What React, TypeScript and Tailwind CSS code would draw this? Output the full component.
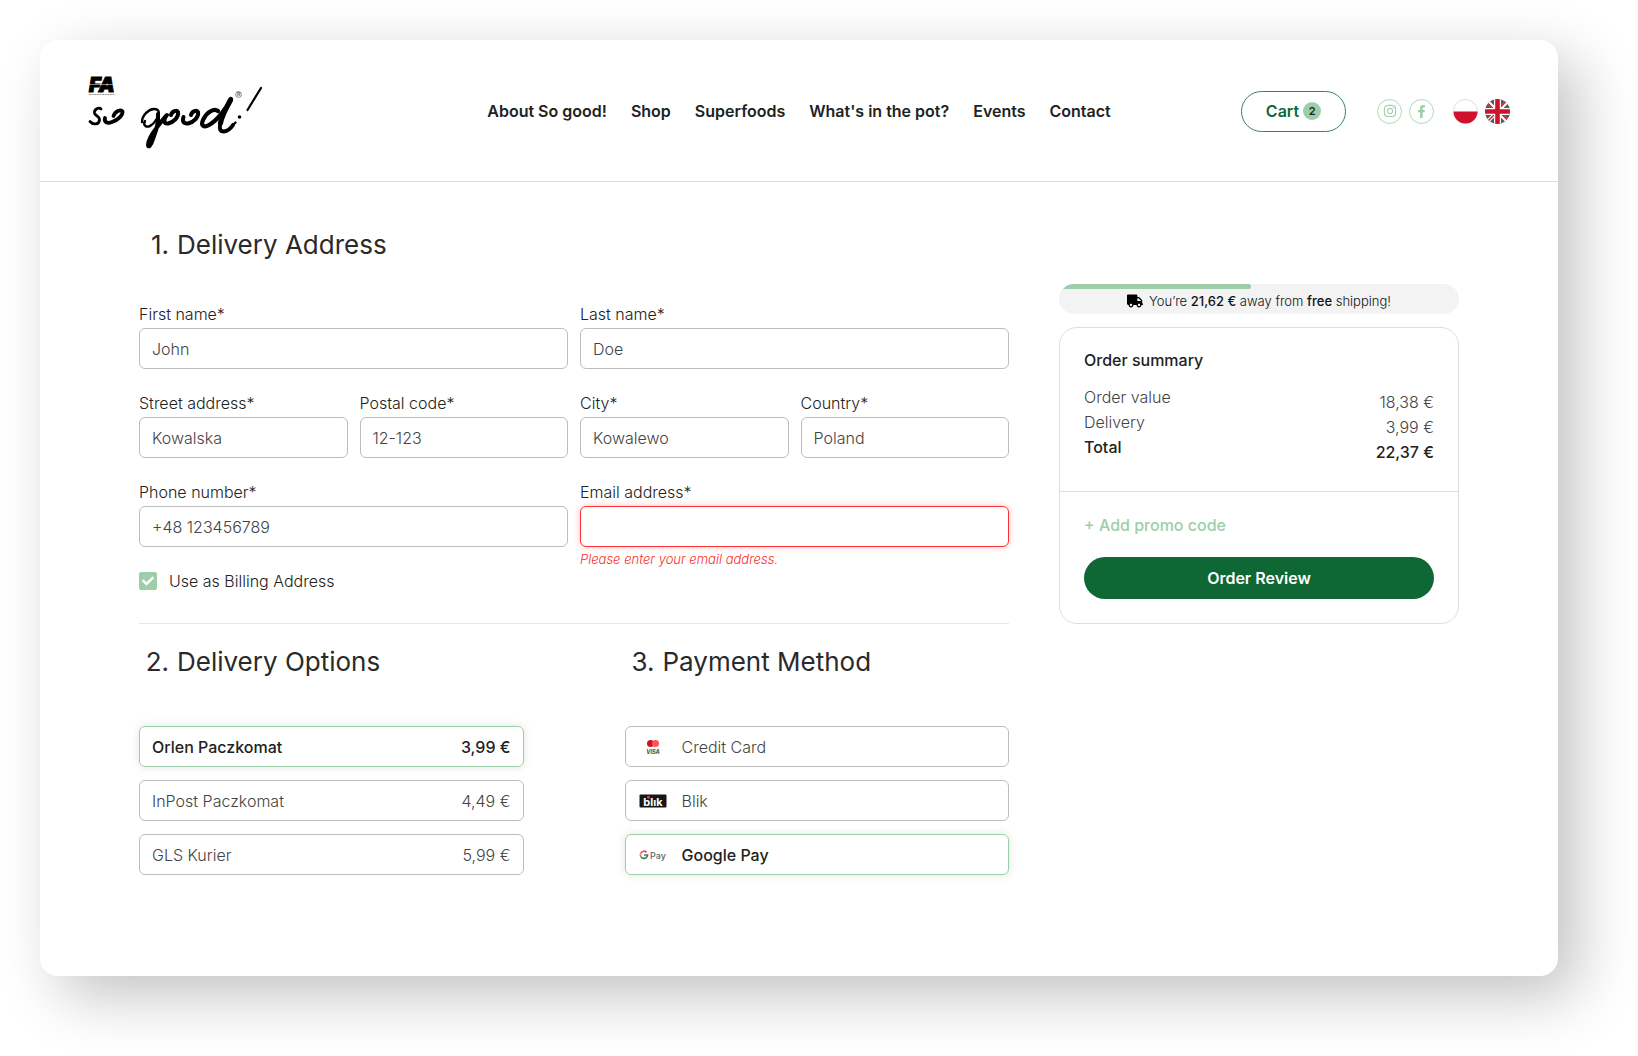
import React, { useId, useState } from "react";
import { FaInstagram, FaFacebookF, FaTruck, FaCheck } from "react-icons/fa";

function Logo() {
  return (
    <svg width="190" height="80" viewBox="0 0 190 80" role="img" aria-label="FA So good!">
      <text x="5" y="21" fontFamily="Inter, sans-serif" fontSize="20" fontWeight="900" fontStyle="italic" stroke="#000" strokeWidth="1">
        FA
      </text>
      <path d="M5 13.500H31" stroke="#fff" strokeWidth="0.500" />
      <path d="M5 23.500H31" stroke="#999" strokeWidth="1.200" strokeDasharray="2 0.600" />
      <g fill="none" stroke="#000" strokeLinecap="round" strokeLinejoin="round">
        <path strokeWidth="2.800" d="M17 38C15 36 10 38 10.500 42C11 45 16 45 15.500 49C15 54 9 54 6 50.500" />
        <path strokeWidth="3.800" d="M21 47C20 51 23 53 28 51C34 49 39 44 38.500 40.500C37 38 31 40 29.500 45" />
        <path strokeWidth="2.400" d="M58 51C58 44 65 38 70 38C76 38 76 43 72 49C69 54 64 57 61.500 55C60 54 60 52 61 50" />
        <path strokeWidth="4" d="M74 43C75 52 72 60 69 68C67 75 64 77 64 74C64 68 70 60 74 55C77 51 80 47 83 44" />
        <path strokeWidth="4" d="M81.500 46C79.500 50 80 53 84 52.500C90 51 95 46 94 41C93 38.500 88 40 87 44" />
        <path strokeWidth="4" d="M99.500 46C98 51 100 53 104 52.500C110 51 115 46 114 41C113 38.500 108 40 107 44" />
        <path strokeWidth="4.200" d="M134 40C130 37 123 41 119.500 48C116 55 120 57 125 54C134 49 143 36 147 28" />
        <path strokeWidth="5.200" d="M146.500 29C142 38 138 44 136.500 52" />
        <path strokeWidth="4" d="M136.500 52C135 58 136 60.500 140 60.500C144 60 147 57 149 54" />
        <path strokeWidth="2.400" d="M149 54L151.500 51.500" />
        <path strokeWidth="2.200" d="M177 17L163.500 39" />
      </g>
      <circle cx="155.500" cy="46" r="1.800" />
      <circle cx="154.500" cy="23.500" r="2.900" fill="none" stroke="#555" strokeWidth="0.700" />
      <text x="152.900" y="25.400" fontFamily="Inter, sans-serif" fontSize="5" fontWeight="600" fill="#555">
        R
      </text>
    </svg>
  );
}

function PolishFlag() {
  return (
    <svg width="25" height="25" viewBox="0 0 25 25" aria-hidden="true">
      <circle cx="12.500" cy="12.500" r="12" fill="#fff" stroke="#dcdcdc" strokeWidth="1" />
      <path d="M0.500 12.500H24.500A12 12 0 0 1 0.500 12.500Z" fill="#d0112b" />
    </svg>
  );
}

function BritishFlag() {
  return (
    <svg width="25" height="25" viewBox="0 0 25 25" aria-hidden="true">
      <clipPath id="uk-round">
        <circle cx="12.500" cy="12.500" r="12.500" />
      </clipPath>
      <g clipPath="url(#uk-round)">
        <rect width="25" height="25" fill="#555a5e" />
        <path d="M0 0L25 25M25 0L0 25" stroke="#fff" strokeWidth="3.600" />
        <path d="M2 3.500L11 12.500M14 12.500L23 21.500M21.500 2L12.500 11M11 14L2 23" stroke="#d0112b" strokeWidth="1.400" />
        <path d="M12.500 0V25M0 12.500H25" stroke="#fff" strokeWidth="7" />
        <path d="M12.500 0V25M0 12.500H25" stroke="#d0112b" strokeWidth="4.600" />
      </g>
    </svg>
  );
}

function CardLogo() {
  return (
    <svg width="28" height="16" viewBox="0 0 28 16" aria-hidden="true">
      <circle cx="11.500" cy="4.500" r="3.500" fill="#cf1029" />
      <circle cx="16.500" cy="4.500" r="3.500" fill="#ff5252" />
      <text x="14" y="14.500" textAnchor="middle" fontFamily="Inter, sans-serif" fontSize="5.500" fontWeight="800" fontStyle="italic" fill="#3c6b54">
        VISA
      </text>
    </svg>
  );
}

function BlikLogo() {
  return (
    <svg width="28" height="16" viewBox="0 0 28 16" aria-hidden="true">
      <rect x="0.500" y="1.500" width="27" height="13" rx="1" fill="#161616" />
      <text x="14" y="12.500" textAnchor="middle" fontFamily="Inter, sans-serif" fontSize="11" fontWeight="700" fill="#fff">
        blık
      </text>
      <circle cx="9.500" cy="4.200" r="1.500" fill="#e8394a" />
    </svg>
  );
}

function GooglePayLogo() {
  return (
    <svg width="28" height="16" viewBox="0 0 28 16" aria-hidden="true">
      <g fill="none" strokeWidth="1.700">
        <path d="M7.600 5.300A3.600 3.600 0 0 0 1.900 6" stroke="#f0524a" />
        <path d="M1.900 6A3.800 3.800 0 0 0 1.900 9.600" stroke="#d98a80" />
        <path d="M1.900 9.600A3.600 3.600 0 0 0 7.400 10.500" stroke="#2f8f55" />
        <path d="M5 8H8.500C8.500 9 8.200 9.900 7.400 10.500" stroke="#5b6f78" />
      </g>
      <text x="11" y="11.500" fontFamily="Inter, sans-serif" fontSize="9" fill="#5f6368">
        Pay
      </text>
    </svg>
  );
}

type FieldProps = {
  label: string;
  value?: string;
  type?: string;
  error?: string;
  className?: string;
};

function Field({ label, value = "", type = "text", error, className = "" }: FieldProps) {
  const id = useId();
  return (
    <div className={className}>
      <label htmlFor={id} className="mb-[2px] block leading-6 font-light text-[#222]">
        {label}
      </label>
      <input
        id={id}
        type={type}
        defaultValue={value}
        aria-invalid={!!error}
        aria-describedby={error ? id + "-error" : undefined}
        className={
          error
            ? "block h-[41px] w-full rounded-md border border-[#fb3236] px-3 font-light text-[#444] shadow-[0_0_6px_rgba(255,60,60,0.35)] outline-none"
            : "block h-[41px] w-full rounded-md border border-[#bdbdbd] px-3 font-light text-[#444] outline-none"
        }
      />
      {error && (
        <p id={id + "-error"} className="text-[13px] leading-6 font-light text-[#f92c2f] italic">
          {error}
        </p>
      )}
    </div>
  );
}

function StepTitle({ number, children }: { number: number; children: React.ReactNode }) {
  return (
    <h2 className="flex gap-2 text-[26px] leading-9 text-[#2a2a2a]">
      <span className="w-[30px] text-right">{number}.</span>
      <span>{children}</span>
    </h2>
  );
}

type Option = { name: string; price?: string; logo?: React.ReactNode };

function OptionList({ group, options, initial }: { group: string; options: Option[]; initial: number }) {
  const [selected, setSelected] = useState(initial);
  return (
    <div role="radiogroup" aria-label={group} className="mt-[46px] flex flex-col gap-[13px]">
      {options.map((o, i) => (
        <label
          key={o.name}
          className={
            i === selected
              ? "flex h-[41px] cursor-pointer items-center rounded-md border border-[#9dcea9] px-3 font-medium text-[#222] shadow-[0_0_8px_rgba(120,160,120,0.25)]"
              : "flex h-[41px] cursor-pointer items-center rounded-md border border-[#bdbdbd] px-3 font-light text-[#444]"
          }
        >
          <input type="radio" name={group} checked={i === selected} onChange={() => setSelected(i)} className="sr-only" />
          {o.logo && <span className="mr-[15px] ml-px">{o.logo}</span>}
          <span>{o.name}</span>
          {o.price && <span className="ml-auto">{o.price}</span>}
        </label>
      ))}
    </div>
  );
}

const navItems = ["About So good!", "Shop", "Superfoods", "What's in the pot?", "Events", "Contact"];

const deliveryOptions: Option[] = [
  { name: "Orlen Paczkomat", price: "3,99 €" },
  { name: "InPost Paczkomat", price: "4,49 €" },
  { name: "GLS Kurier", price: "5,99 €" },
];

const paymentOptions: Option[] = [
  { name: "Credit Card", logo: <CardLogo /> },
  { name: "Blik", logo: <BlikLogo /> },
  { name: "Google Pay", logo: <GooglePayLogo /> },
];

function Header() {
  return (
    <header className="grid grid-cols-[1fr_auto_1fr] items-center border-b border-[#dedede] px-12 pt-[31px] pb-[30px]">
      <div className="-ml-1">
        <Logo />
      </div>
      <nav className="flex gap-6 font-semibold text-[#222]">
        {navItems.map((item) => (
          <a key={item} href="#">
            {item}
          </a>
        ))}
      </nav>
      <div className="flex items-center justify-end">
        <button className="flex h-[41px] w-[105px] items-center justify-center gap-1 rounded-full border border-[#3d8259] font-semibold text-[#0f6735]">
          Cart
          <span className="grid size-[18px] place-items-center rounded-full bg-[#9dcea9] text-[11px] text-[#222]">2</span>
        </button>
        <div className="ml-[31px] flex gap-[7px] text-[#9dcea9]">
          <a href="#" aria-label="Instagram" className="grid size-[25px] place-items-center rounded-full border border-[#b4d9bd]">
            <FaInstagram size={14} />
          </a>
          <a href="#" aria-label="Facebook" className="grid size-[25px] place-items-center rounded-full border border-[#b4d9bd]">
            <FaFacebookF size={13} />
          </a>
        </div>
        <div className="ml-[19px] flex gap-[7px]">
          <a href="#" aria-label="Polski">
            <PolishFlag />
          </a>
          <a href="#" aria-label="English">
            <BritishFlag />
          </a>
        </div>
      </div>
    </header>
  );
}

function Summary() {
  return (
    <aside className="w-[400px] shrink-0 pt-[57px]">
      <div className="h-[30px] overflow-hidden rounded-full bg-[#f3f3f3]">
        <div className="h-[5px] w-[48%] rounded-r-full bg-[#9dcea9]" />
        <p className="flex items-center justify-center gap-[6px] text-[13px] leading-6 font-light text-[#111]">
          <FaTruck size={16} className="text-black" />
          <span>
            You’re <b className="font-medium">21,62 €</b> away from <b className="font-medium">free</b> shipping!
          </span>
        </p>
      </div>
      <section className="mt-[13px] rounded-[18px] border border-[#dedede] text-[#222]">
        <div className="px-6 pt-5 pb-[31px]">
          <h3 className="leading-6 font-medium">Order summary</h3>
          <dl className="mt-[13px] grid grid-cols-2 leading-[25px] font-light text-[#444]">
            <dt>Order value</dt>
            <dd className="mt-[5px] -mb-[5px] text-right">18,38 €</dd>
            <dt>Delivery</dt>
            <dd className="mt-[5px] -mb-[5px] text-right">3,99 €</dd>
            <dt className="font-medium text-[#222]">Total</dt>
            <dd className="mt-[5px] -mb-[5px] text-right font-medium text-[#222]">22,37 €</dd>
          </dl>
        </div>
        <div className="border-t border-[#dedede] px-6 pt-[21px] pb-6">
          <button className="block leading-6 font-medium text-[#9dcea9]">+ Add promo code</button>
          <button className="mt-5 h-[42px] w-full rounded-full bg-[#0f6735] font-semibold text-white">Order Review</button>
        </div>
      </section>
    </aside>
  );
}

export default function App() {
  return (
    <div className="min-h-screen bg-white pt-10 pr-20 pb-20 pl-10 font-['Inter',sans-serif] text-base">
      <div className="rounded-[18px] bg-white shadow-[20px_20px_60px_rgba(0,0,0,0.24)]">
        <Header />
        <main className="mx-auto flex max-w-[1320px] gap-[50px] pt-[45px] pb-[101px]">
          <form className="min-w-0 flex-1" onSubmit={(e) => e.preventDefault()}>
            <StepTitle number={1}>Delivery Address</StepTitle>
            <div className="mt-[39px] grid grid-cols-4 gap-x-3 gap-y-[22px]">
              <Field className="col-span-2" label="First name*" value="John" />
              <Field className="col-span-2" label="Last name*" value="Doe" />
              <Field label="Street address*" value="Kowalska" />
              <Field label="Postal code*" value="12-123" />
              <Field label="City*" value="Kowalewo" />
              <Field label="Country*" value="Poland" />
              <div className="col-span-2">
                <Field label="Phone number*" type="tel" value="+48 123456789" />
                <label className="mt-[22px] flex items-center gap-3 leading-6 font-light text-[#222]">
                  <span className="relative grid size-[18px] place-items-center">
                    <input type="checkbox" defaultChecked className="peer size-[18px] appearance-none rounded-[2px] border border-[#9dcea9] checked:bg-[#9dcea9]" />
                    <FaCheck size={12} className="pointer-events-none absolute hidden text-white peer-checked:block" />
                  </span>
                  Use as Billing Address
                </label>
              </div>
              <Field className="col-span-2" label="Email address*" type="email" error="Please enter your email address." />
            </div>
            <hr className="mt-[30px] border-[#e6e6e6]" />
            <div className="mt-5 flex gap-[101px]">
              <section className="flex-1">
                <StepTitle number={2}>Delivery Options</StepTitle>
                <OptionList group="Delivery options" options={deliveryOptions} initial={0} />
              </section>
              <section className="flex-1">
                <StepTitle number={3}>Payment Method</StepTitle>
                <OptionList group="Payment method" options={paymentOptions} initial={2} />
              </section>
            </div>
          </form>
          <Summary />
        </main>
      </div>
    </div>
  );
}
